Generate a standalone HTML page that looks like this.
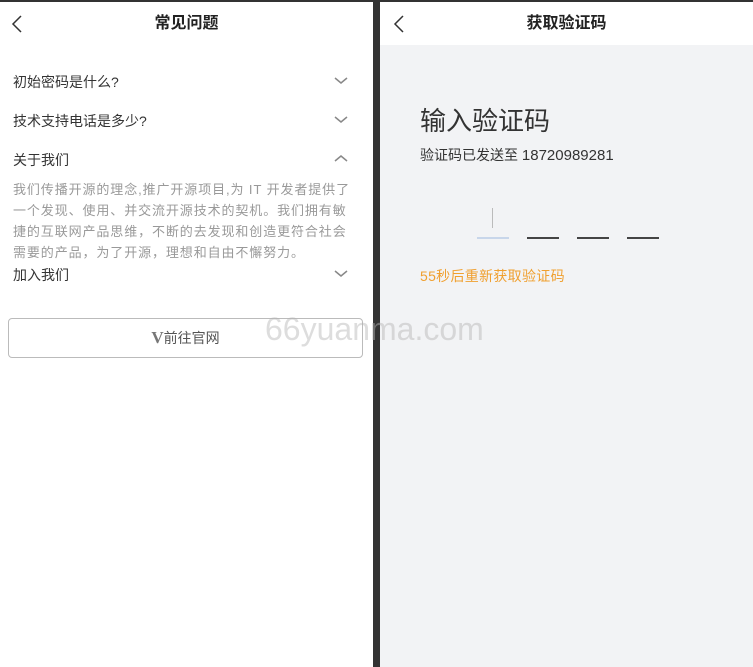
<!DOCTYPE html>
<html><head><meta charset="utf-8"><style>
*{margin:0;padding:0;box-sizing:border-box}
body{width:753px;height:667px;background:#333;position:relative;overflow:hidden;font-family:"Liberation Sans","Noto Sans CJK SC",sans-serif}
.l{position:absolute;left:0;top:2px;width:373px;height:665px;background:#fff}
.r{position:absolute;left:380px;top:2px;width:373px;height:665px;background:#f2f3f5}
.hd{position:absolute;left:0;top:0;width:100%;height:43px;background:#fff;text-align:center;font-size:16px;font-weight:bold;color:#222;line-height:44px}
.q{position:absolute;left:13px;font-size:14px;color:#333}
.chev{position:absolute;left:333px}
.ans{position:absolute;left:13px;top:177px;width:360px;white-space:nowrap;font-size:13px;letter-spacing:0.9px;line-height:21px;color:#999}
.btn{position:absolute;left:8px;top:316px;width:355px;height:40px;border:1px solid #bbb;border-radius:4px;text-align:center;line-height:38px;font-size:14px;color:#555}
</style></head><body>
<div class="l">
<div class="hd">常见问题</div>
<svg style="position:absolute;left:10px;top:12px" width="14" height="20"><path d="M11 2 L3 10 L11 18" fill="none" stroke="#333" stroke-width="1.5"/></svg>
<div class="q" style="top:70px">初始密码是什么?</div>
<div class="q" style="top:109px">技术支持电话是多少?</div>
<div class="q" style="top:148px">关于我们</div>
<div class="q" style="top:263px">加入我们</div>
<svg class="chev" style="top:74px" width="16" height="10"><path d="M2 2 L8 7 L14 2" fill="none" stroke="#888" stroke-width="1.5"/></svg>
<svg class="chev" style="top:113px" width="16" height="10"><path d="M2 2 L8 7 L14 2" fill="none" stroke="#888" stroke-width="1.5"/></svg>
<svg class="chev" style="top:151px" width="16" height="10"><path d="M2 8 L8 3 L14 8" fill="none" stroke="#888" stroke-width="1.5"/></svg>
<svg class="chev" style="top:267px" width="16" height="10"><path d="M2 2 L8 7 L14 2" fill="none" stroke="#888" stroke-width="1.5"/></svg>
<div class="ans">我们传播开源的理念,推广开源项目,为 IT 开发者提供了<br>一个发现、使用、并交流开源技术的契机。我们拥有敏<br>捷的互联网产品思维，不断的去发现和创造更符合社会<br>需要的产品，为了开源，理想和自由不懈努力。</div>
<div class="btn"><b style="font-family:'Liberation Serif',serif;font-size:17px;color:#777">V</b>前往官网</div>
</div>
<div class="r">
<div class="hd">获取验证码</div>
<svg style="position:absolute;left:12px;top:12px" width="14" height="20"><path d="M11 2 L3 10 L11 18" fill="none" stroke="#333" stroke-width="1.5"/></svg>
<div style="position:absolute;left:40px;top:99px;font-size:26px;color:#333">输入验证码</div>
<div style="position:absolute;left:40px;top:143px;font-size:14px;color:#333">验证码已发送至 <span style="font-size:15px">18720989281</span></div>
<div style="position:absolute;left:112px;top:206px;width:1px;height:20px;background:#bbb"></div>
<div style="position:absolute;left:97px;top:235px;width:32px;height:2px;background:#c8d6ea"></div>
<div style="position:absolute;left:147px;top:235px;width:32px;height:2px;background:#444"></div>
<div style="position:absolute;left:197px;top:235px;width:32px;height:2px;background:#444"></div>
<div style="position:absolute;left:247px;top:235px;width:32px;height:2px;background:#444"></div>
<div style="position:absolute;left:40px;top:264px;font-size:14px;letter-spacing:0.3px;color:#f0a030">55秒后重新获取验证码</div>
</div>
<div style="position:absolute;left:265px;top:311px;font-size:32px;color:rgba(180,180,180,0.45)">66yuanma.com</div>
</body></html>
